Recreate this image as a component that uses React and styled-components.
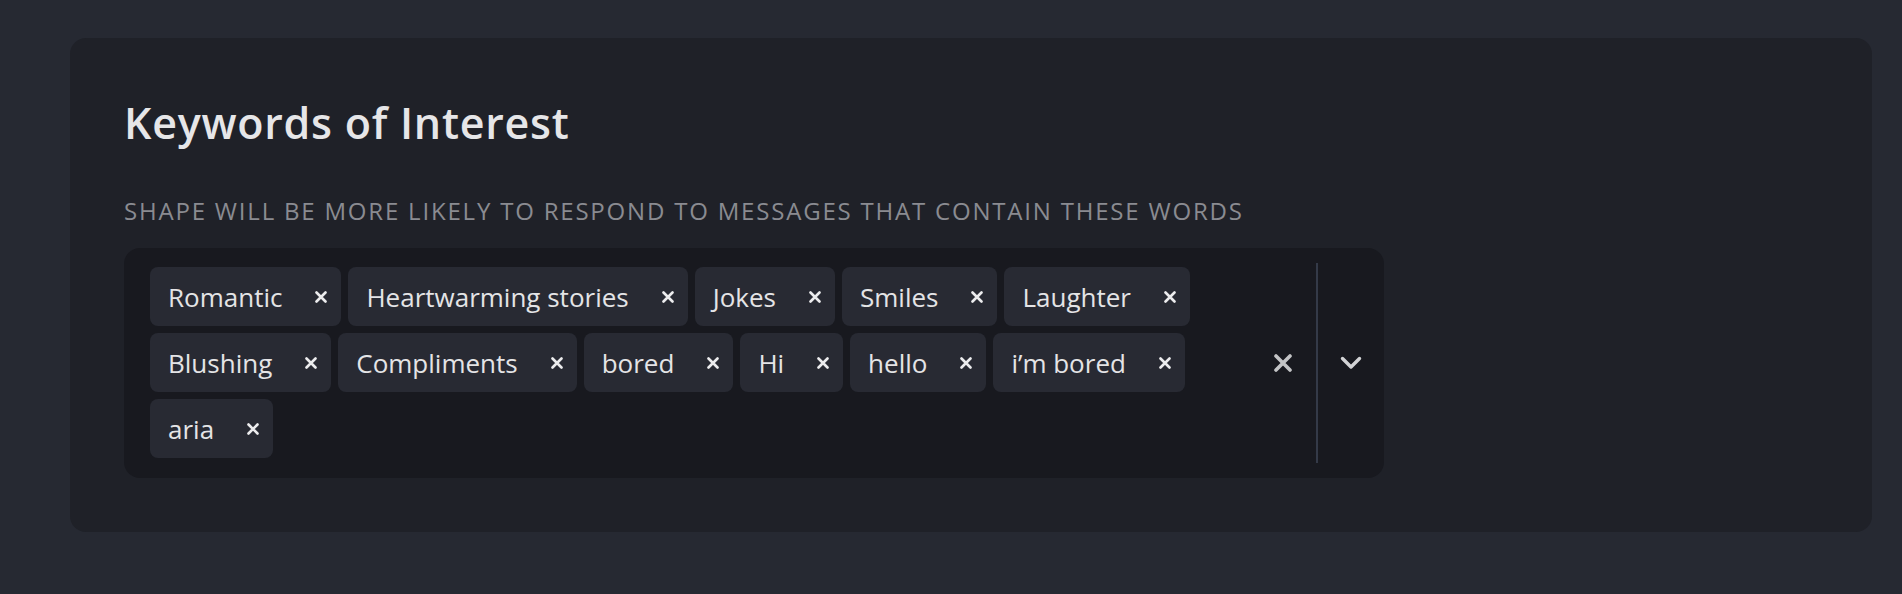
import React from "react";
import styled, { createGlobalStyle } from "styled-components";

const keywords = [
  "Romantic",
  "Heartwarming stories",
  "Jokes",
  "Smiles",
  "Laughter",
  "Blushing",
  "Compliments",
  "bored",
  "Hi",
  "hello",
  "i’m bored",
  "aria",
];

const GlobalStyle = createGlobalStyle`
  html, body {
    margin: 0;
    padding: 0;
    background-color: #262932;
  }
  body {
    font-family: "Open Sans", "Noto Sans", sans-serif;
  }
`;

const Page = styled.div`
  padding: 38px 30px 61px 70px;
`;

const Card = styled.section`
  background-color: #1f2128;
  border-radius: 16px;
  padding: 59px 54px 54px 54px;
`;

const Title = styled.h2`
  margin: 0;
  font-size: 43px;
  line-height: 1.2;
  font-weight: 600;
  letter-spacing: 0.75px;
  color: #e6e6e8;
`;

const Hint = styled.p`
  margin: 48px 0 23px 0;
  font-size: 24px;
  line-height: 1.2;
  letter-spacing: 1.8px;
  color: #8a8b91;
  text-transform: uppercase;
`;

const SelectBox = styled.div`
  display: flex;
  align-items: stretch;
  width: 1260px;
  box-sizing: border-box;
  background-color: #18191f;
  border-radius: 16px;
  padding: 19px 0 20px 26px;
`;

const Values = styled.div`
  flex: 1;
  display: flex;
  flex-wrap: wrap;
  gap: 7px;
  align-content: flex-start;
`;

const Tag = styled.div`
  display: flex;
  align-items: center;
  height: 59px;
  border-radius: 8px;
  background-color: #282a33;
  color: #e4e4e6;
`;

const TagLabel = styled.span`
  font-size: 26px;
  line-height: 1;
  padding: 0 19px 0 18px;
  white-space: nowrap;
`;

const TagRemove = styled.span`
  display: flex;
  align-items: center;
  justify-content: center;
  width: 40px;
  height: 100%;
  color: #ececee;
`;

const Indicators = styled.div`
  display: flex;
  align-items: center;
  margin: -4px 0 -5px 0;
`;

const IndicatorButton = styled.span`
  display: flex;
  align-items: center;
  justify-content: center;
  width: 66px;
  align-self: center;
  color: ${(p) => (p.$muted ? "#c3c4c6" : "#d2d3d5")};
`;

const Separator = styled.span`
  align-self: stretch;
  width: 2px;
  background-color: #343a48;
`;

const SmallX = () => (
  <svg width="12" height="12" viewBox="0 0 12 12">
    <path d="M1.5 1.5 L10.5 10.5 M10.5 1.5 L1.5 10.5" stroke="currentColor" strokeWidth="2.6" strokeLinecap="round" />
  </svg>
);

const ClearX = () => (
  <svg width="18" height="18" viewBox="0 0 18 18">
    <path d="M2 2 L16 16 M16 2 L2 16" stroke="currentColor" strokeWidth="3.6" strokeLinecap="round" />
  </svg>
);

const Chevron = () => (
  <svg width="22" height="14" viewBox="0 0 22 14">
    <path d="M2.5 2.5 L11 11 L19.5 2.5" stroke="currentColor" strokeWidth="3.4" strokeLinecap="round" strokeLinejoin="round" fill="none" />
  </svg>
);

const App = () => {
  return (
    <Page>
      <GlobalStyle />
      <Card>
        <Title>Keywords of Interest</Title>
        <Hint>Shape will be more likely to respond to messages that contain these words</Hint>
        <SelectBox>
          <Values>
            {keywords.map((word) => (
              <Tag key={word}>
                <TagLabel>{word}</TagLabel>
                <TagRemove>
                  <SmallX />
                </TagRemove>
              </Tag>
            ))}
          </Values>
          <Indicators>
            <IndicatorButton $muted>
              <ClearX />
            </IndicatorButton>
            <Separator />
            <IndicatorButton>
              <Chevron />
            </IndicatorButton>
          </Indicators>
        </SelectBox>
      </Card>
    </Page>
  );
};

export default App;
